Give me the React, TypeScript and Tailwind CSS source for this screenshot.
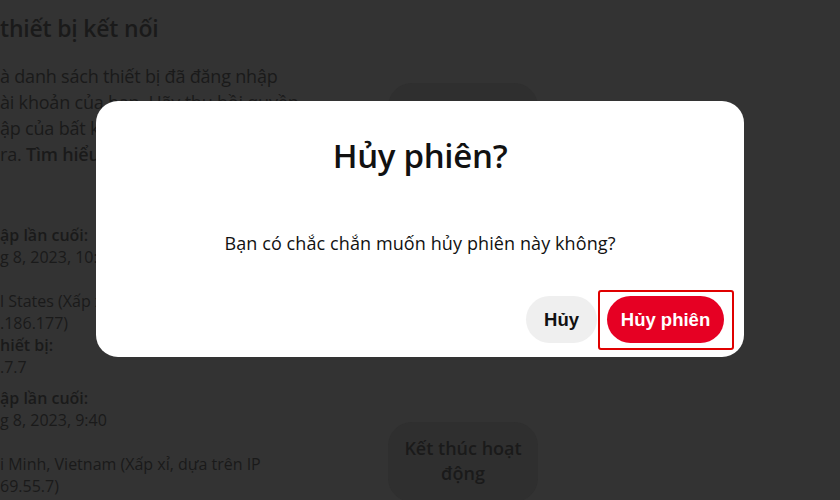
import React from "react";

const bgText = "text-[#1a1a1a]";

function Line({ children, bold = false }: { children?: React.ReactNode; bold?: boolean }) {
  return (
    <div className={`h-[22px] leading-[22px] whitespace-nowrap text-[16px] ${bold ? "font-semibold" : ""}`}>
      {children ?? "\u00a0"}
    </div>
  );
}

export default function App() {
  return (
    <div
      className="relative w-[840px] h-[500px] overflow-hidden bg-[#333333]"
      style={{ fontFamily: '"Open Sans", "Noto Sans", sans-serif' }}
    >
      {/* dimmed page underneath */}
      <div className={`flex ${bgText}`}>
        <div className="w-[388px] shrink-0">
          <div className="mt-[13px] h-[30px] leading-[30px] text-[23px] font-semibold whitespace-nowrap tracking-[-0.2px]">
            thiết bị kết nối
          </div>
          <div className="mt-[20px] text-[18px] leading-[26px] whitespace-nowrap tracking-[-0.2px]">
            <div>à danh sách thiết bị đã đăng nhập</div>
            <div>ài khoản của bạn. Hãy thu hồi quyền</div>
            <div>ập của bất kỳ phiên nào mà bạn không</div>
            <div>
              ra. <span className="font-semibold">Tìm hiểu thêm</span>
            </div>
          </div>
          <div className="mt-[57px]">
            <Line bold>ập lần cuối:</Line>
            <Line>g 8, 2023, 10:12</Line>
            <Line />
            <Line>l States (Xấp xỉ, dựa trên IP</Line>
            <Line>.186.177)</Line>
            <Line bold>hiết bị:</Line>
            <Line>.7.7</Line>
          </div>
          <div className="mt-[9px]">
            <Line bold>ập lần cuối:</Line>
            <Line>g 8, 2023, 9:40</Line>
            <Line />
            <Line>i Minh, Vietnam (Xấp xỉ, dựa trên IP</Line>
            <Line>69.55.7)</Line>
          </div>
        </div>
        <div className="flex flex-col w-[150px] shrink-0">
          <div className="mt-[83px] h-[78px] rounded-[24px] bg-[#2f2f2f] flex items-center justify-center text-center text-[18px] font-semibold leading-[25px]">
            Đăng xuất
          </div>
          <div className="mt-[261px] h-[80px] rounded-[24px] bg-[#2f2f2f] flex items-center justify-center text-center text-[18px] font-semibold leading-[25px] px-4 pb-[3px]">
            Kết thúc hoạt động
          </div>
        </div>
      </div>

      {/* modal */}
      <div className="absolute inset-0 flex justify-center items-start pt-[101px]">
        <div className="w-[648px] h-[256px] bg-white rounded-[22px] flex flex-col items-center text-[#111111]">
          <div className="mt-[35px] h-[40px] leading-[40px] text-[33px] font-semibold tracking-[-0.3px]">
            Hủy phiên?
          </div>
          <div className="mt-[54px] h-[26px] leading-[26px] text-[18px] tracking-[0.1px]">
            Bạn có chắc chắn muốn hủy phiên này không?
          </div>
          <div
            className="mt-[40px] self-stretch flex justify-end gap-[10px] pr-[20px]"
            style={{ fontFamily: '"Liberation Sans", Arial, sans-serif' }}
          >
            <button className="w-[71px] h-[47px] rounded-full bg-[#efefef] text-[#111111] text-[18.5px] font-bold">
              Hủy
            </button>
            <span className="relative">
              <button className="w-[117px] h-[47px] rounded-full bg-[#e60023] text-white text-[18.5px] font-bold">
                Hủy phiên
              </button>
              <span className="absolute left-[-9px] top-[-6px] right-[-10px] bottom-[-7px] border-2 border-[#e00000] rounded-[3px] pointer-events-none" />
            </span>
          </div>
        </div>
      </div>
    </div>
  );
}
